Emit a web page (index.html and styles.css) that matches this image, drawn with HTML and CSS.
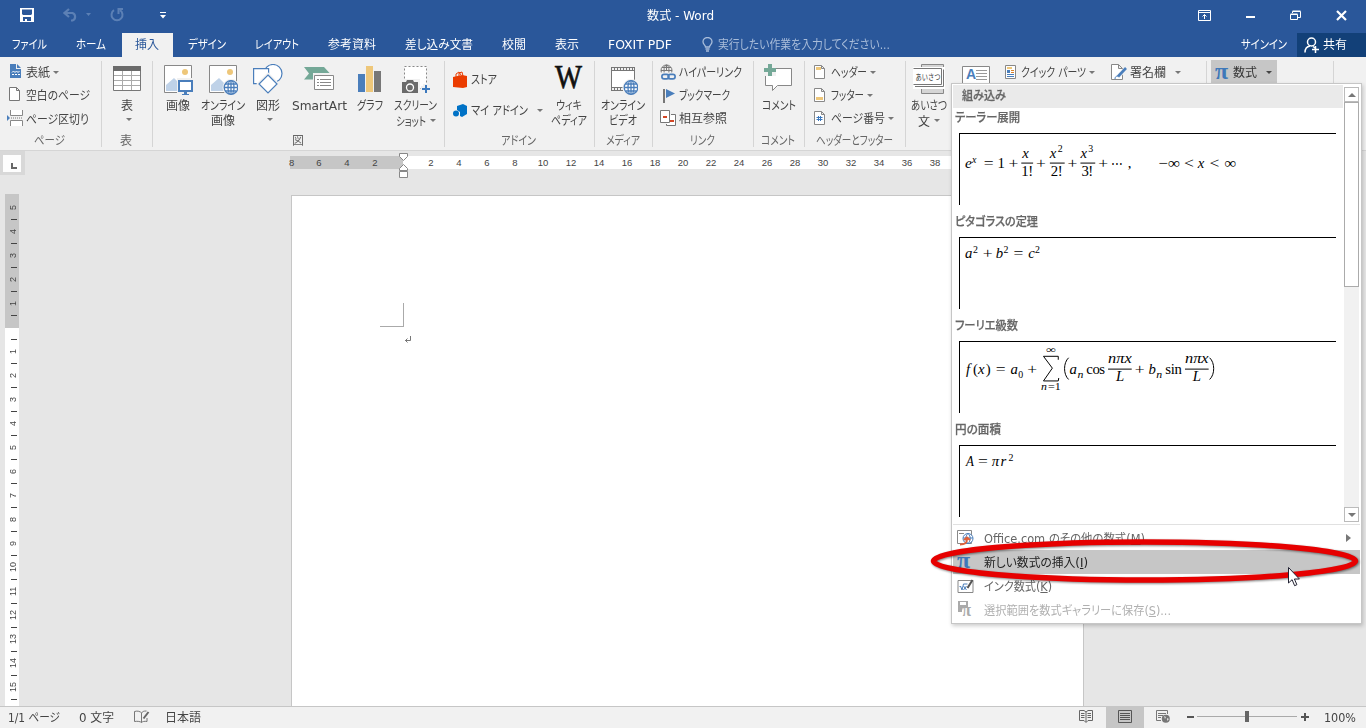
FILE: index.html
```html
<!DOCTYPE html>
<html lang="ja">
<head>
<meta charset="utf-8">
<title>数式 - Word</title>
<link rel="stylesheet" href="styles.css">
</head>
<body>
<div class="app">
  <header class="titlebar">
    <div class="quick">
      <svg class="ic-save" width="14" height="14" viewBox="0 0 14 14"><path fill="#fff" fill-rule="evenodd" d="M0 0h14v14H0zM2 1.500v4.500l1 1h8l1-1v-4.500zM3 9v4h2v-2h2v2h4v-4z"/></svg>
      <svg class="ic-undo" width="15" height="14" viewBox="0 0 15 14"><path fill="none" stroke="#5c80b5" stroke-width="2.200" d="M6 1 1.500 5 6 9M2 5h7.500a4 4 0 0 1 0 7.500H8"/></svg>
      <svg class="ic-tri" width="5" height="3" viewBox="0 0 5 3"><path fill="#5c80b5" d="M0 0h5L2.500 3z"/></svg>
      <svg class="ic-redo" width="14" height="14" viewBox="0 0 14 14"><path fill="none" stroke="#5c80b5" stroke-width="2" d="M4 2.200a5.500 5.500 0 1 0 6 0M8 1h5M8.500 0v6"/></svg>
      <svg class="ic-custom" width="6" height="7" viewBox="0 0 6 7"><path fill="#fff" d="M0 0h6v1H0zM0 3h6L3 6.500z"/></svg>
    </div>
    <div class="title"><span class="t" data-w="67">数式 - Word</span></div>
    <div class="winbtns">
      <svg width="13" height="11" viewBox="0 0 13 11"><path fill="none" stroke="#fff" d="M.5.5h12v10H.5zM.5 2.500h12M6.500 9V4.500M4.500 6.500l2-2 2 2"/></svg>
      <svg width="9" height="11" viewBox="0 0 9 11"><path fill="#fff" d="M0 6h9v2H0z"/></svg>
      <svg width="11" height="11" viewBox="0 0 11 11"><path fill="none" stroke="#fff" d="M2.500 3V1.500h8v6H8M.5 4.500h7v5h-7zM2.500 1h8M.5 4h7"/></svg>
      <svg width="11" height="11" viewBox="0 0 11 11"><path fill="none" stroke="#fff" stroke-width="2.200" d="m1 1 9 9m0-9-9 9"/></svg>
    </div>
  </header>

  <nav class="tabs">
    <a class="tab"><span class="t" data-w="35">ファイル</span></a>
    <a class="tab"><span class="t" data-w="30">ホーム</span></a>
    <a class="tab active"><span class="t" data-w="24">挿入</span></a>
    <a class="tab"><span class="t" data-w="38">デザイン</span></a>
    <a class="tab"><span class="t" data-w="44">レイアウト</span></a>
    <a class="tab"><span class="t" data-w="48">参考資料</span></a>
    <a class="tab"><span class="t" data-w="68">差し込み文書</span></a>
    <a class="tab"><span class="t" data-w="24">校閲</span></a>
    <a class="tab"><span class="t" data-w="24">表示</span></a>
    <a class="tab"><span class="t" data-w="64">FOXIT PDF</span></a>
    <div class="tell">
      <svg width="11" height="15" viewBox="0 0 11 15"><path fill="none" stroke="#a9bdda" stroke-width="1.300" d="M3.500 10C3.500 8 1 7.500 1 4.800a4.400 4.200 0 0 1 9 0C10 7.500 7.500 8 7.500 10zM3.500 12h4M4 14h3"/></svg>
      <span class="t" data-w="172">実行したい作業を入力してください...</span>
    </div>
    <a class="signin"><span class="t" data-w="46">サインイン</span></a>
    <a class="share">
      <svg width="16" height="16" viewBox="0 0 16 16"><g fill="none" stroke="#fff" stroke-width="1.500"><circle cx="7.500" cy="5" r="4"/><path d="M1 15.500c0-4 2-6 5-6.500M9 9.500l2 1.500M8 12.500h7M11.500 9v7"/></g></svg>
      <span class="t" data-w="24">共有</span>
    </a>
  </nav>

  <section class="ribbon">
    <div class="group g-pages">
      <div class="body"><div class="rows">
        <div class="cmd"><svg width="16" height="16" viewBox="0 0 16 16"><path fill="#4a7ebb" d="M2 1h6v5h5v9H2z"/><path fill="#4a7ebb" d="M9 1l4 4H9z"/><path fill="none" stroke="#fff" d="M4 9.500 5.500 8 7 9.500 8.500 8 10 9.500 11.500 8"/><path stroke="#fff" stroke-dasharray="2 1" d="M4 11.500h8"/></svg><span class="t" data-w="24">表紙</span><b class="dn"></b></div>
        <div class="cmd"><svg width="16" height="16" viewBox="0 0 16 16"><path fill="#fff" stroke="#777" d="M1.500 1.500h7l3 3v10h-10zM8.500 1.500v3h3"/></svg><span class="t" data-w="64">空白のページ</span></div>
        <div class="cmd"><svg width="18" height="17" viewBox="0 0 18 17"><path fill="#fff" stroke="#888" d="M4.500 1v5.500h12V1M4.500 17v-5.500h12V17"/><path stroke="#777" d="M5 9h12" stroke-dasharray="1 1"/><path fill="#4a7ebb" d="M1 6 4 9 1 12z"/></svg><span class="t" data-w="63">ページ区切り</span></div>
      </div></div>
      <div class="name"><span class="t" data-w="31">ページ</span></div>
    </div>

    <div class="group g-table">
      <div class="body"><div class="big w50">
        <svg width="28" height="32" viewBox="0 0 28 32"><path fill="#fff" stroke="#777" d="M.5 2.500h27v24H.5z"/><path fill="#6b6b6b" d="M0 2h28v5H0z"/><path stroke="#aaa" d="M1 11.500h26M1 16.500h26M1 21.500h26M9.500 7v19M18.500 7v19"/></svg>
        <span class="t" data-w="12">表</span><b class="dn"></b>
      </div></div>
      <div class="name"><span class="t" data-w="12">表</span></div>
    </div>

    <div class="group g-illust">
      <div class="body">
        <div class="big w44"><svg width="30" height="32" viewBox="0 0 30 32"><path fill="#fff" stroke="#888" d="M1.500 1.500h27v27h-27z"/><circle cx="22" cy="8" r="3" fill="#eec77a"/><path fill="#bfd2e8" d="M3 27v-6l8-7 7 7 2 6z"/><path fill="#f1f1f1" d="M14 14h16v18H14z"/><path fill="#fff" stroke="#4a7ebb" stroke-width="2" d="M16 17h13v10H16z"/><path fill="#4a7ebb" d="M21 28h3v2h2v1h-7v-1h2z"/></svg><span class="t" data-w="24">画像</span></div>
        <div class="big w46"><svg width="30" height="32" viewBox="0 0 30 32"><path fill="#fff" stroke="#888" d="M1.500 1.500h27v27h-27z"/><circle cx="22" cy="8" r="3" fill="#eec77a"/><path fill="#bfd2e8" d="M3 27v-6l8-7 7 7 2 6z"/><circle cx="23" cy="23.500" r="8.500" fill="#f1f1f1"/><g fill="#fff" stroke="#4a7ebb" stroke-width="1.300"><circle cx="23" cy="23.500" r="6.800"/><ellipse cx="23" cy="23.500" rx="3" ry="6.800"/><path d="M23 17v13M16 23.500h13M17 20h11M17 27h11"/></g></svg><span class="t" data-w="44">オンライン</span><span class="t" data-w="24">画像</span></div>
        <div class="big w44"><svg width="30" height="32" viewBox="0 0 30 32"><g fill="#fff" stroke="#4a7ebb" stroke-width="1.200"><circle cx="20" cy="9.500" r="9"/><path d="M.6 4.600h15v15H.6z"/><path stroke="#f1f1f1" stroke-width="4" d="m15 11 9 9-9 9-9-9z"/><path d="m15 11 9 9-9 9-9-9z"/></g></svg><span class="t" data-w="24">図形</span><b class="dn"></b></div>
        <div class="big w58"><svg width="30" height="32" viewBox="0 0 30 32"><path fill="#74a897" d="M0 3h20l6 6.500H10v6H0l5-6z"/><path fill="#f1f1f1" d="M9 9h21v17H9z"/><path fill="#fff" stroke="#888" d="M10.500 11.500h19v14h-19z"/><path stroke="#888" d="M13 15.500h2m1 0h11M13 18.500h2m1 0h11M13 21.500h2m1 0h11"/></svg><span class="t" data-w="55">SmartArt</span></div>
        <div class="big w44"><svg width="24" height="32" viewBox="0 0 24 32"><path fill="#4a7ebb" d="M0 10h7v18H0z"/><path fill="#eec77a" d="M8 2h7v26H8z"/><path fill="#777" d="M16 7h7v21h-7z"/></svg><span class="t" data-w="26">グラフ</span></div>
        <div class="big w47"><svg width="28" height="32" viewBox="0 0 28 32"><path fill="#fff" stroke="#888" stroke-dasharray="2 2" d="M2.500 2.500h22v22h-22z"/><path fill="#f1f1f1" d="M0 15h18v15H0z"/><path fill="#6b6b6b" d="M0 18h4l1-2h6l1 2h4v11H0z"/><circle cx="8" cy="23.500" r="3.500" fill="#6b6b6b" stroke="#fff" stroke-width="1.300"/><path stroke="#f1f1f1" stroke-width="5" d="M19 24.500h9M23.500 20v9"/><path stroke="#3b78bd" stroke-width="2" d="M20 25h8M24 21v8"/></svg><span class="t" data-w="43">スクリーン</span><span class="line"><span class="t" data-w="30">ショット</span><b class="dn"></b></span></div>
      </div>
      <div class="name"><span class="t" data-w="12">図</span></div>
    </div>

    <div class="group g-addin">
      <div class="body">
        <div class="rows wide">
          <div class="cmd"><svg width="15" height="17" viewBox="0 0 15 17"><path fill="#eb3c00" d="m0 6 9-2 5 1v11l-4 1-10-1z"/><path fill="none" stroke="#eb3c00" d="M3 6V3l3-2 2 3M6 5V2l3-1 1 4"/></svg><span class="t" data-w="26">ストア</span></div>
          <div class="cmd"><svg width="15" height="17" viewBox="0 0 15 17"><path fill="#0072c6" d="m4 4 6-2 4 2v8l-5 3-2-1 0-4-3-2z"/><circle cx="3" cy="11.500" r="3" fill="#0072c6"/></svg><span class="t" data-w="57">マイ アドイン</span><b class="dn far"></b></div>
        </div>
        <div class="big w44"><svg width="30" height="32" viewBox="0 0 30 32"><text class="wiki" x="1" y="24" textLength="27" lengthAdjust="spacingAndGlyphs">W</text></svg><span class="t" data-w="26">ウィキ</span><span class="t" data-w="36">ペディア</span></div>
      </div>
      <div class="name"><span class="t" data-w="35">アドイン</span></div>
    </div>

    <div class="group g-media">
      <div class="body"><div class="big w56"><svg width="30" height="32" viewBox="0 0 30 32"><path fill="#fff" d="M3 6h24v18H3z"/><path fill="none" stroke="#777" d="M3.500 3v24M26.500 3v14"/><path fill="none" stroke="#777" d="M3 3.500h24M3 6.500h24M3 23.500h12M3 26.500h12"/><path stroke="#777" stroke-width="3" stroke-dasharray="1 2" d="M3 5h24M3 25h12"/><circle cx="23" cy="23.500" r="8.500" fill="#f1f1f1"/><g fill="#fff" stroke="#4a7ebb" stroke-width="1.300"><circle cx="23" cy="23.500" r="6.800"/><ellipse cx="23" cy="23.500" rx="3" ry="6.800"/><path d="M23 17v13M16.500 23.500h13M17.500 20h11M17.500 27h11"/></g></svg><span class="t" data-w="44">オンライン</span><span class="t" data-w="28">ビデオ</span></div></div>
      <div class="name"><span class="t" data-w="34">メディア</span></div>
    </div>

    <div class="group g-links">
      <div class="body"><div class="rows">
        <div class="cmd"><svg width="16" height="17" viewBox="0 0 16 17"><g fill="none" stroke="#777"><circle cx="6.500" cy="6.500" r="5.500"/><ellipse cx="6.500" cy="6.500" rx="2.500" ry="5.500"/><path d="M1 6.500h11M2 3.500h9M6.500 1v6"/></g><path fill="#f1f1f1" d="M0 8.500h16V17H0z"/><g fill="none" stroke="#4a7ebb" stroke-width="1.700"><rect x="1.900" y="10.400" width="7" height="4.500" rx="2.200"/><rect x="8.100" y="10.400" width="7" height="4.500" rx="2.200"/></g></svg><span class="t" data-w="63">ハイパーリンク</span></div>
        <div class="cmd"><svg width="16" height="16" viewBox="0 0 16 16"><path fill="#777" d="M3 2h2v14H3z"/><path fill="#4a7ebb" d="m6 2 9 4.500L6 11z"/></svg><span class="t" data-w="51">ブックマーク</span></div>
        <div class="cmd"><svg width="16" height="17" viewBox="0 0 16 17"><path fill="#fff" stroke="#777" d="M.5.500h9v12h-9zM11 4.500h4.500v11h-9V14"/><path fill="#d24726" d="M3 6h4v2H3zM10 10h4v2h-4z"/></svg><span class="t" data-w="48">相互参照</span></div>
      </div></div>
      <div class="name"><span class="t" data-w="25">リンク</span></div>
    </div>

    <div class="group g-comment">
      <div class="body"><div class="big w50"><svg width="30" height="32" viewBox="0 0 30 32"><path fill="#fff" stroke="#888" d="M1.500 4.500h26v17h-14l-5 5v-5h-7z"/><path fill="#f1f1f1" d="M0 0h12v12H0z"/><path fill="#74a897" d="M4 0h4v4h4v4H8v4H4V8H0V4h4z"/></svg><span class="t" data-w="34">コメント</span></div></div>
      <div class="name"><span class="t" data-w="34">コメント</span></div>
    </div>

    <div class="group g-header">
      <div class="body"><div class="rows">
        <div class="cmd"><svg width="11" height="14" viewBox="0 0 11 14"><path fill="#fff" stroke="#888" d="M.5.5h7l3 3v10H.5zM7.500.5v3h3"/><path fill="#eec77a" d="M2 2h5v3H2z"/></svg><span class="t" data-w="36">ヘッダー</span><b class="dn"></b></div>
        <div class="cmd"><svg width="11" height="14" viewBox="0 0 11 14"><path fill="#fff" stroke="#888" d="M.5.5h7l3 3v10H.5zM7.500.5v3h3"/><path fill="#eec77a" d="M2 9h7v3H2z"/></svg><span class="t" data-w="33">フッター</span><b class="dn"></b></div>
        <div class="cmd"><svg width="11" height="14" viewBox="0 0 11 14"><path fill="#fff" stroke="#888" d="M.5.5h7l3 3v10H.5zM7.500.5v3h3"/><path fill="none" stroke="#3b78bd" d="M2.500 6.500h6M2.500 8.500h6M4.500 5v5M6.500 5v5"/></svg><span class="t" data-w="54">ページ番号</span><b class="dn"></b></div>
      </div></div>
      <div class="name"><span class="t" data-w="77">ヘッダーとフッター</span></div>
    </div>

    <div class="group g-text">
      <div class="body">
        <div class="big w46"><svg width="32" height="32" viewBox="0 0 32 32"><path fill="#d5d5d5" stroke="#888" d="M8.500.5h22v29h-22z"/><path fill="#fff" d="M0 3h32v22H0z"/><path fill="none" stroke="#777" d="M.5 4.500h28v16H.5M2 22.500h28.500V5.500"/><text class="aisatsu" x="2.500" y="16" textLength="25" lengthAdjust="spacingAndGlyphs">あいさつ</text></svg><span class="t" data-w="36">あいさつ</span><span class="line"><span class="t" data-w="12">文</span><b class="dn"></b></span></div>
        <svg class="textbox" width="28" height="30" viewBox="0 0 28 30"><path fill="#fff" stroke="#888" d="M.5.5h27v28H.5z"/><text class="abox" x="4" y="13">A</text><path stroke="#999" d="M14 4.500h11M14 7.500h11M14 10.500h11M14 13.500h11M3 17.500h22"/></svg>
        <div class="cmd parts"><svg width="11" height="14" viewBox="0 0 11 14"><path fill="#fff" stroke="#888" d="M.5.5h10v13H.5z"/><path fill="#eec77a" d="M2 2h5v2H2z"/><path fill="#4a7ebb" d="M2 5h3v3H2z"/><path stroke="#d9822b" d="M6 5.500h3M6 7.500h3"/><path stroke="#4a7ebb" d="M2 9.500h7M2 11.500h7"/></svg><span class="t" data-w="65">クイック パーツ</span><b class="dn"></b></div>
        <div class="cmd sign"><svg width="16" height="16" viewBox="0 0 16 16"><path fill="#fff" stroke="#888" d="M.5.5h7l4 4v11H.5zM7.500.5v4h4"/><path stroke="#f1f1f1" stroke-width="4" d="M15 4l-8 9"/><path stroke="#4a7ebb" stroke-width="2.600" d="M15 4 7 12.500"/><path fill="none" stroke="#4a7ebb" d="M4 15c0-2 1-3 3-3"/></svg><span class="t" data-w="36">署名欄</span><b class="dn far"></b></div>
      </div>
    </div>

    <div class="group g-symbol">
      <div class="body"><div class="eq-btn"><span class="pi">π</span><span class="t" data-w="24">数式</span><b class="dn dark"></b></div></div>
    </div>
  </section>

  <main class="work">
    <div class="tabcorner"><div class="tabstop"><svg width="18" height="17" viewBox="0 0 18 17"><path fill="#666" d="M8 8h2v4h4v2H8z"/></svg></div></div>
    <div class="hruler">
      <div class="scale"><i>8</i><i>6</i><i>4</i><i>2</i><i></i><i>2</i><i>4</i><i>6</i><i>8</i><i>10</i><i>12</i><i>14</i><i>16</i><i>18</i><i>20</i><i>22</i><i>24</i><i>26</i><i>28</i><i>30</i><i>32</i><i>34</i><i>36</i><i>38</i></div>
      <svg class="indent" width="11" height="26" viewBox="0 0 11 26"><path fill="#fff" stroke="#888" d="M1.500 1.500h8v3l-4 4-4-4zM5.500 12.500l4 4v2h-8v-2zM1.500 19.500h8v6h-8z"/></svg>
    </div>
    <div class="vruler"><i>5</i><i>4</i><i>3</i><i>2</i><i>1</i><i></i><i>1</i><i>2</i><i>3</i><i>4</i><i>5</i><i>6</i><i>7</i><i>8</i><i>9</i><i>10</i><i>11</i><i>12</i><i>13</i><i>14</i><i>15</i></div>
    <div class="page">
      <div class="crop"></div>
      <svg class="ret" width="8" height="8" viewBox="0 0 8 8"><path fill="none" stroke="#777" d="M6.500 0v4.500H1M3.500 2.500l-2 2 2 2M2.500 3v3"/></svg>
    </div>
  </main>

  <footer class="status">
    <span class="t" data-w="52">1/1 ページ</span>
    <span class="t s-words" data-w="35">0 文字</span>
    <svg class="s-proof" width="16" height="14" viewBox="0 0 16 14"><path fill="none" stroke="#777" d="M7.500 3v9.500M.5 1.500c3-1 6 0 7 1.500 1-1.500 2-2 5-2M.5 1.500v10c3-.5 6 0 7 1 1-1 3-1.500 5.500-1V8"/><path stroke="#666" stroke-width="2" d="m14.500 2-5 6.500"/></svg>
    <span class="t s-lang" data-w="36">日本語</span>
    <div class="views">
      <svg width="14" height="13" viewBox="0 0 14 13"><path fill="none" stroke="#666" d="M.5.500H5l2 1.500 2-1.500h4.500v10H9l-2 2-2-2H.5zM7 2v10M2 3.500h3.500M2 5.500h3.500M2 7.500h3.500M8.500 3.500H12M8.500 5.500H12M8.500 7.500H12"/></svg>
      <div class="view-on"><svg width="14" height="13" viewBox="0 0 14 13"><path fill="none" stroke="#555" d="M.5.500h13v12H.5zM2 3.500h10M2 5.500h10M2 7.500h10M2 9.500h10"/></svg></div>
      <svg class="s-web" width="14" height="13" viewBox="0 0 14 13"><path fill="none" stroke="#777" d="M11.500 4V.5H.5v10H5M2 3.500h8M2 5.500h5M2 7.500h3"/><circle cx="9.800" cy="8.800" r="4" fill="#777"/><path fill="#ddd" d="m8 6 2 1-1 2zM11 8l2 1-2 2z"/></svg>
    </div>
    <b class="minus"></b>
    <div class="slider"><div class="knob"></div></div>
    <svg class="plus" width="8" height="8" viewBox="0 0 8 8"><path fill="#555" d="M3 0h2v3h3v2H5v3H3V5H0V3h3z"/></svg>
    <span class="t s-pct" data-w="32">100%</span>
  </footer>
</div>

<div class="drop">
  <div class="gallery">
    <div class="list">
      <div class="ghead"><span class="t" data-w="44">組み込み</span></div>
      <div class="item">
        <h3><span class="t" data-w="65">テーラー展開</span></h3>
        <svg class="eq" width="377" height="72" viewBox="0 0 377 72">
          <g class="it"><text x="3" y="34" textLength="7" lengthAdjust="spacingAndGlyphs">e</text><text class="sm" x="10" y="29">x</text><text x="61" y="24">x</text><text x="89" y="24">x</text><text x="120" y="24">x</text><text x="239" y="34">x</text></g>
          <g><text x="22" y="34" textLength="10" lengthAdjust="spacingAndGlyphs">=</text><text x="36" y="34">1</text><text x="47" y="34" textLength="10" lengthAdjust="spacingAndGlyphs">+</text><text x="60" y="43" textLength="12">1!</text><text x="75" y="34" textLength="10" lengthAdjust="spacingAndGlyphs">+</text><text class="sm" x="97" y="18">2</text><text x="90" y="43" textLength="12">2!</text><text x="107" y="34" textLength="10" lengthAdjust="spacingAndGlyphs">+</text><text class="sm" x="128" y="18">3</text><text x="121" y="43" textLength="12">3!</text><text x="138" y="34" textLength="10" lengthAdjust="spacingAndGlyphs">+</text><text x="151" y="34" textLength="12" lengthAdjust="spacingAndGlyphs">⋯</text><text x="168" y="34">,</text><text x="199" y="34" textLength="22" lengthAdjust="spacingAndGlyphs">−∞</text><text x="225" y="34" textLength="10" lengthAdjust="spacingAndGlyphs">&lt;</text><text x="251" y="34" textLength="10" lengthAdjust="spacingAndGlyphs">&lt;</text><text x="266" y="34" textLength="12" lengthAdjust="spacingAndGlyphs">∞</text></g>
          <path stroke="#000" d="M60 29.500h12M89 29.500h15M120 29.500h15"/>
        </svg>
      </div>
      <div class="item">
        <h3><span class="t" data-w="83">ピタゴラスの定理</span></h3>
        <svg class="eq" width="377" height="72" viewBox="0 0 377 72">
          <g class="it"><text x="3" y="20">a</text><text x="34" y="20">b</text><text x="67" y="20">c</text></g>
          <text class="sm" x="11" y="15">2</text><text x="21" y="20" textLength="10" lengthAdjust="spacingAndGlyphs">+</text><text class="sm" x="42" y="15">2</text><text x="52" y="20" textLength="10" lengthAdjust="spacingAndGlyphs">=</text><text class="sm" x="74" y="15">2</text>
        </svg>
      </div>
      <div class="item">
        <h3><span class="t" data-w="63">フーリエ級数</span></h3>
        <svg class="eq" width="377" height="72" viewBox="0 0 377 72">
          <g class="it"><text x="4" y="32">f</text><text x="16" y="32">x</text><text x="49" y="32">a</text><text x="109" y="32">a</text><text class="sm" x="117" y="36" textLength="6" lengthAdjust="spacingAndGlyphs">n</text><text x="148" y="21" textLength="24" lengthAdjust="spacingAndGlyphs">nπx</text><text x="156" y="40">L</text><text x="189" y="32">b</text><text class="sm" x="197" y="36" textLength="6" lengthAdjust="spacingAndGlyphs">n</text><text x="226" y="21" textLength="24" lengthAdjust="spacingAndGlyphs">nπx</text><text x="234" y="40">L</text><text class="sm" x="80" y="49" textLength="6" lengthAdjust="spacingAndGlyphs">n</text></g>
          <g><text x="11" y="32">(</text><text x="24" y="32">)</text><text x="34" y="32" textLength="10" lengthAdjust="spacingAndGlyphs">=</text><text class="sm" x="57" y="36">0</text><text x="66" y="32" textLength="10" lengthAdjust="spacingAndGlyphs">+</text><text class="sm" x="85" y="11" textLength="10" lengthAdjust="spacingAndGlyphs">∞</text><text class="sm" x="87" y="49" textLength="13" lengthAdjust="spacingAndGlyphs">=1</text><text x="126" y="32" textLength="19">cos</text><text x="175" y="32" textLength="10" lengthAdjust="spacingAndGlyphs">+</text><text x="206" y="32" textLength="17">sin</text></g>
          <path fill="none" stroke="#000" d="M148 27.500h24M226 27.500h24M108 16c-5.500 5-5.500 17 0 22M251 16c5.500 5 5.500 17 0 22M97.500 18v-3.500h-15l9 12-9 13h15l.500-3"/>
        </svg>
      </div>
      <div class="item">
        <h3><span class="t" data-w="46">円の面積</span></h3>
        <svg class="eq" width="377" height="72" viewBox="0 0 377 72">
          <g class="it"><text x="4" y="20" textLength="8" lengthAdjust="spacingAndGlyphs">A</text><text x="30" y="20">π</text><text x="39" y="20">r</text></g><text x="16" y="20" textLength="10" lengthAdjust="spacingAndGlyphs">=</text><text class="sm" x="47" y="15">2</text>
        </svg>
      </div>
    </div>
    <div class="scroll"><div class="sbtn"><b class="up"></b></div><div class="thumb"></div><div class="sbtn end"><b class="down"></b></div></div>
  </div>
  <div class="menu">
    <div class="mi"><svg width="17" height="16" viewBox="0 0 17 16"><path fill="#fff" stroke="#888" d="M.5.500h14v13H.5zM2 3.500h5"/><circle cx="11" cy="8.500" r="5" fill="#fff" stroke="#4a7ebb"/><path fill="none" stroke="#4a7ebb" d="M6 8h10M11 3.500c-3 3-3 7 0 10 3-3 3-7 0-10"/><path fill="none" stroke="#e0603a" stroke-width="2" d="M3 14.500c6 0 7-2 7-5.500M7 10l3-2.500 3 2.500"/></svg><span class="t" data-w="161">Office.com のその他の数式(<u>M</u>)</span><b class="right"></b></div>
    <div class="mi on"><span class="pi">π</span><span class="t" data-w="104">新しい数式の挿入(<u>I</u>)</span></div>
    <div class="mi"><svg width="16" height="14" viewBox="0 0 16 14"><path fill="#fff" stroke="#888" d="M.5 1.500h15v12H.5z"/><path fill="none" stroke="#4a7ebb" d="m2 8 1-1 1.500 4L6 5h4M6 7l3 4M9 7l-3 4"/><path fill="none" stroke="#555" stroke-width="2" d="m15 1-5 8"/></svg><span class="t" data-w="68">インク数式(<u>K</u>)</span></div>
    <div class="mi off"><svg width="17" height="20" viewBox="0 0 17 20"><path fill="#aaa" fill-rule="evenodd" d="M1 1h10v7H5v4H1zM3 2v3h6V2z"/><text class="pismall" x="5" y="16" textLength="9" lengthAdjust="spacingAndGlyphs">π</text></svg><span class="t" data-w="187">選択範囲を数式ギャラリーに保存(<u>S</u>)...</span></div>
  </div>
</div>

<svg class="mark" width="440" height="54" viewBox="0 0 440 54"><ellipse cx="219.500" cy="26" rx="211" ry="19" fill="none" stroke="#e60000" stroke-width="5.500"/></svg>
<svg class="cursor" width="12" height="20" viewBox="0 0 12 20"><path fill="#fff" stroke="#223" d="M.5.500v15.500l3.600-3.300 2.500 6 2.300-1-2.500-5.700h5z"/></svg>
<script src="labels.js"></script>
</body>
</html>
```

FILE: styles.css
```css
* { box-sizing: border-box; }
body { margin: 0; width: 1366px; height: 728px; overflow: hidden; position: relative; font: 12px/15px "DejaVu Sans", "Noto Sans CJK JP", sans-serif; font-feature-settings: "palt"; color: #444; background: #e6e6e6; }
svg { display: block; flex: none; }
.t { display: inline-block; white-space: pre; transform-origin: 0 50%; flex: none; height: 13px; line-height: 15px; }
.app { display: flex; flex-direction: column; height: 728px; }

.titlebar { height: 33px; background: #2a579a; color: #fff; display: grid; grid-template-columns: 560px 1fr 560px; }
.quick { display: flex; align-items: flex-start; padding: 8px 0 0 20px; }
.ic-undo { margin-left: 29px; }
.ic-tri { margin: 5px 0 0 8px; }
.ic-redo { margin-left: 19px; }
.ic-custom { margin: 4px 0 0 36px; }
.title { text-align: center; padding: 9px 5px 0 0; }
.winbtns { display: flex; justify-content: flex-end; align-items: center; gap: 35px; padding: 0 18px 3px 0; margin-right: 1px; }

.tabs { height: 24px; background: #2a579a; color: #fff; display: flex; gap: 2px; }
.tab { padding: 5px 14px 0 13px; }
.tab:first-child { padding-left: 12px; }
.active { background: #f1f1f1; color: #2a579a; }
.tell { display: flex; gap: 5px; padding: 4px 0 0 14px; color: #a9bdda; }
.tell .t, .share .t { margin-top: 1px; }
.signin { margin-left: auto; padding: 5px 8px 0 0; }
.share { width: 69px; background: #124078; display: flex; gap: 3px; padding: 4px 0 0 7px; }

.ribbon { height: 94px; background: #f1f1f1; border-bottom: 1px solid #d5d5d5; display: flex; padding-top: 4px; }
.group { height: 86px; border-right: 1px solid #d5d5d5; display: flex; flex-direction: column; flex: none; }
.body { height: 73px; display: flex; }
.name { display: flex; justify-content: center; color: #666; padding-right: 2px; }
.g-pages { width: 102px; }
.g-table { width: 51px; }
.g-illust { width: 292px; }
.g-illust .body { padding-left: 3px; }
.g-addin { width: 150px; }
.g-media { width: 58px; }
.g-links { width: 101px; }
.g-comment { width: 51px; }
.g-header { width: 101px; }
.g-text { width: 301px; }
.g-symbol { width: 127px; }
.w44 { width: 44px; } .w46 { width: 46px; } .w47 { width: 47px; } .w50 { width: 50px; } .w56 { width: 56px; } .w58 { width: 58px; }
.big { display: flex; flex-direction: column; align-items: center; padding-top: 3px; flex: none; }
.big .t { margin-top: 2px; }
.big > svg + .t { margin-top: 3px; }
.big > .dn { margin: 6px 0 0 3px; }
.line { display: flex; align-items: center; gap: 4px; height: 16px; }
.dn { display: block; flex: none; border: 3px solid transparent; border-top-color: #777; border-bottom: 0; }
.dn.dark { border-top-color: #444; }
.rows { display: flex; flex-direction: column; }
.cmd { display: flex; align-items: center; height: 23px; }
.cmd .dn { margin-left: 3px; }
.g-pages .rows { padding-left: 8px; }
.g-pages .cmd svg { margin: -3px 2px 0 0; }
.g-pages .cmd:nth-child(3) svg { margin: -3px 2px 0 -2px; }
.g-pages .cmd:nth-child(3) { padding-top: 1px; }
.rows.wide { width: 102px; padding: 3px 0 0 8px; }
.rows.wide .cmd { height: 31px; }
.rows.wide svg { margin-right: 3px; }
.cmd .far { margin-left: 9px; }
.g-links .rows { padding-left: 7px; }
.g-links .cmd svg { margin: -1px 3px 0 0; }
.g-header .rows { padding-left: 9px; }
.g-header .cmd svg { margin: -2px 6px 0 0; }
.wiki { font: 33px "Liberation Serif", serif; fill: #111; stroke: #111; stroke-width: .7px; }
.aisatsu { font: 8px "Noto Sans CJK JP", sans-serif; fill: #333; }
.abox { font: bold 14px "Liberation Sans", sans-serif; fill: #4a7ebb; }
.textbox { margin: 5px 0 0 10px; }
.parts { margin-left: 15px; }
.parts svg { margin: -2px 5px 0 0; }
.sign { margin-left: 16px; }
.sign svg { margin: -2px 3px 0 0; }
.eq-btn { display: flex; margin: -1px 0 0 4px; width: 66px; height: 25px; background: #c6c6c6; align-items: center; padding-left: 4px; color: #333; }
.eq-btn .t { margin: 0 9px 0 4px; }
.pi { font: bold 24px/16px "Liberation Serif", serif; color: #3e78b9; width: 14px; height: 20px; flex: none; }

.work { flex: 1; display: grid; grid-template-columns: 25px 265px 1fr; grid-template-rows: 43px 1fr; min-height: 0; }
.tabcorner { width: 25px; height: 24px; background: #d8d8d8; padding: 4px 3px; }
.tabstop { width: 18px; height: 17px; background: #fdfdfd; }
.hruler { grid-column: 3; position: relative; padding-top: 5px; width: 700px; }
.scale { display: flex; height: 13px; background: linear-gradient(90deg, #c6c6c6 113px, #fff 113px); }
.scale i { width: 28px; flex: none; text-align: center; font: 9.500px/14px "Liberation Sans", sans-serif; color: #444; }
.scale i:first-child { width: 15px; text-align: left; text-indent: -1px; }
.indent { position: absolute; left: 108px; top: 1px; }
.vruler { grid-row: 2; margin-left: 5px; width: 14px; padding-top: 7px; background: linear-gradient(#c6c6c6 134px, #fff 134px); overflow: hidden; }
.vruler i { display: block; height: 24px; writing-mode: vertical-rl; transform: rotate(180deg); width: 12px; margin-left: 2px; text-align: center; position: relative; padding-top: 12px; font: 9px/12px "Liberation Sans", sans-serif; color: #444; }
.vruler i::after { content: ""; position: absolute; left: 2px; top: 5px; width: 6px; height: 1px; background: #444; }
.page { grid-column: 3; grid-row: 2; margin: 1px 0 0 1px; width: 793px; background: #fff; border: solid #c6c6c6; border-width: 1px 1px 0; padding: 107px 0 0 88px; }
.crop { width: 24px; height: 24px; border: solid #aaa; border-width: 0 1px 1px 0; }
.ret { margin: 9px 0 0 24px; }

.status { height: 22px; background: #f1f1f1; border-top: 1px solid #c6c6c6; display: flex; align-items: center; padding-left: 8px; }
.s-words { margin-left: 19px; }
.s-proof { margin: -2px 0 0 20px; }
.s-lang { margin-left: 15px; }
.views { display: flex; align-items: center; margin-left: 878px; height: 21px; }
.views > svg { margin-top: -2px; }
.view-on { background: #c6c6c6; width: 38px; height: 21px; padding: 3px 12px; margin: 0 12px 0 13px; }
.minus { width: 7px; height: 2px; background: #555; margin-left: 17px; margin-top: -1px; }
.slider { width: 100px; height: 12px; margin: -2px 0 0 3px; background: linear-gradient(#aaa, #aaa) 0 5px / 100% 1px no-repeat; }
.knob { width: 4px; height: 11px; background: #666; margin-left: 48px; }
.plus { margin: -1px 0 0 4px; }
.s-pct { margin-left: 15px; }

.drop { position: absolute; left: 951px; top: 83px; width: 411px; height: 541px; background: #fff; border: 1px solid #c6c6c6; box-shadow: 1px 2px 4px rgba(0,0,0,.2); padding: 1px; color: #666; }
.gallery { display: flex; height: 440px; border-bottom: 1px solid #e1e1e1; }
.list { width: 391px; }
.ghead { width: 390px; height: 23px; background: #eaeaea; padding: 4px 0 0 9px; }
.item { height: 104px; padding: 3px 0 0 2px; }
.item h3 { margin: 0 0 7px; height: 15px; font-size: 12px; }
.ghead .t, .item h3 .t { font-weight: 500; -webkit-text-stroke: .25px #666; }
.eq { margin-left: 4px; border: solid #000; border-width: 1px 0 0 1px; font: 15px "Liberation Serif", serif; fill: #000; }
.it { font-style: italic; }
.sm { font-size: 10px; }
.scroll { width: 15px; height: 435px; margin: 2px 0 0 0; background: #f1f1f1; display: flex; flex-direction: column; }
.sbtn { height: 15px; background: #fff; border: 1px solid #bbb; display: grid; place-items: center; }
.end { margin-top: auto; }
.thumb { height: 185px; background: #fff; border: 1px solid #ababab; }
.up, .down { border: 4px solid transparent; border-top: 0; border-bottom-color: #777; }
.down { transform: rotate(180deg); }
.menu { display: flex; flex-direction: column; padding-top: 1px; }
.mi { height: 24px; width: 407px; display: flex; align-items: center; padding-left: 4px; }
.mi > svg, .mi > .pi { width: 17px; margin-right: 10px; flex: none; }
.on { background: #c6c6c6; color: #222; }
.off { color: #b0b0b0; }
.pismall { font: bold 18px "Liberation Serif", serif; fill: #aaa; }
.right { margin: 0 9px 0 auto; border: 4px solid transparent; border-left: 5px solid #777; border-right: 0; }

.mark { position: absolute; left: 925px; top: 535px; filter: drop-shadow(1px 1px 1px rgba(0,0,0,.5)); }
.cursor { position: absolute; left: 1288px; top: 567px; }
```

FILE: labels.js
```js
// Condense or widen each label so that it fills its slot width.
document.querySelectorAll('.t').forEach(function (el) {
  var slot = parseFloat(el.dataset.w);
  var natural = el.getBoundingClientRect().width;
  el.style.width = slot + 'px';
  el.style.transform = 'scaleX(' + slot / natural + ')';
});
```
